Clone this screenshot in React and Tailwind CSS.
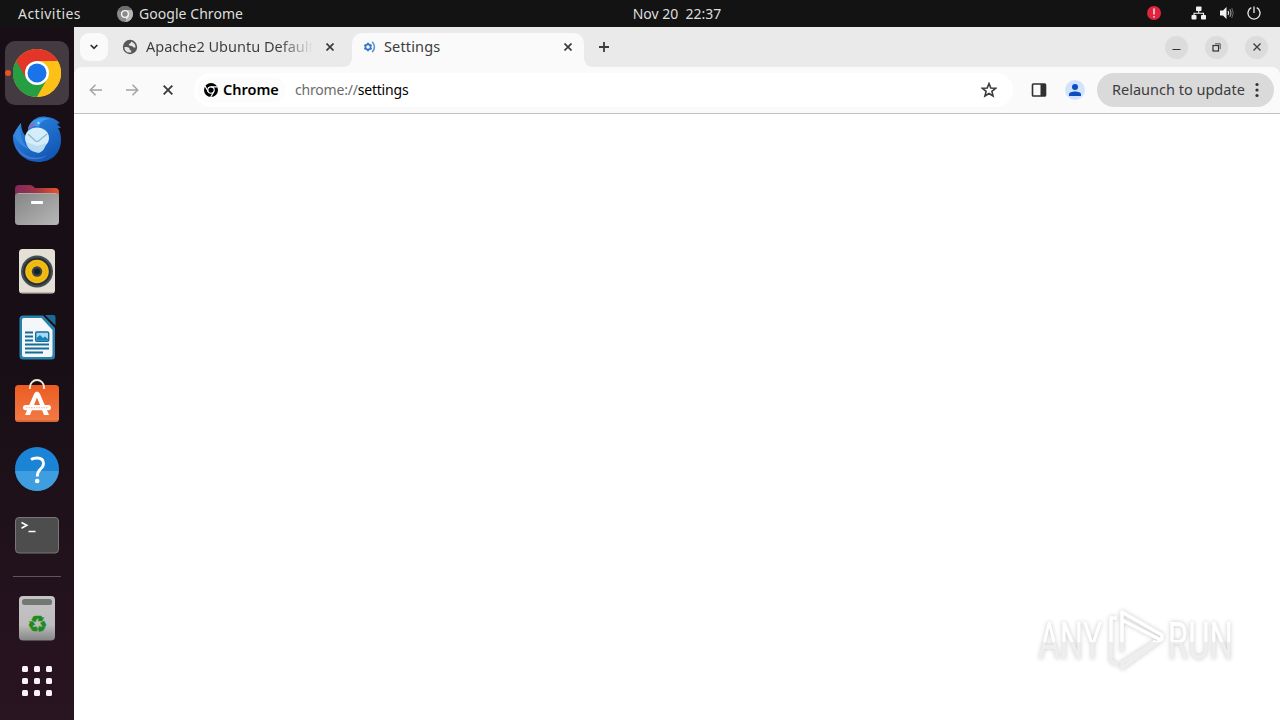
import React from 'react';
import clsx from 'clsx';

const ChromeLogo = () => (
  <svg width="48" height="48" viewBox="0 0 48 48">
    <circle cx="24" cy="24" r="24" fill="#fbc116" />
    <path d="M24 24 L3.2 12 A24 24 0 0 0 24 48 L34.4 30 Z" fill="#269f42" />
    <path d="M24 24 L13.6 30 L3.2 12 A24 24 0 0 1 44.8 12 H24 Z" fill="#e33629" />
    <path d="M24 12 H44.8 A24 24 0 0 1 24 48 L34.4 30 Z" fill="#fbc116" />
    <circle cx="24" cy="24" r="12" fill="#fff" />
    <circle cx="24" cy="24" r="9.5" fill="#1a73e8" />
  </svg>
);

const MonoChrome = () => (
  <svg width="14" height="14" viewBox="0 0 48 48">
    <circle cx="24" cy="24" r="24" fill="#000" />
    <g fill="none" stroke="#fff" strokeWidth="4">
      <circle cx="24" cy="24" r="11" />
      <path d="M24 13 H46 M14.5 29.5 L3.5 10.5 M33.5 29.5 L23 48" />
    </g>
  </svg>
);

const SymbolicChrome = () => (
  <svg width="16" height="16" viewBox="0 0 16 16">
    <circle cx="8" cy="8" r="8" fill="#8b8b8b" />
    <path d="M8 8 L1.1 4 A8 8 0 0 1 14.9 4 H8 Z" fill="#6d6d6d" />
    <path d="M8 4 H14.9 A8 8 0 0 1 8 16 L11.5 10 Z" fill="#b5b5b5" />
    <circle cx="8" cy="8" r="3.4" fill="#8b8b8b" stroke="#f4f4f4" strokeWidth="1.4" />
    <path d="M11.2 9.6 L9.2 13" stroke="#f4f4f4" strokeWidth="1.1" />
  </svg>
);

const Thunderbird = () => (
  <svg width="48" height="48" viewBox="0 0 48 48">
    <defs>
      <linearGradient id="bird" x1="0" y1="0" x2="0.7" y2="1">
        <stop offset="0" stopColor="#2f8be8" />
        <stop offset="1" stopColor="#1256b4" />
      </linearGradient>
    </defs>
    <path d="M8 8 C4 13 2 16 1 19 L0 20 C-1 33 9 47 25 47 C39 47 48 38 48 25 C48 20 47 16 45 13 L48 13 L44 9 L47 8 C43 4 38 2 34 2 C26 0 17 5 15 14 L14 23 C10 19 8 14 8 8 Z" fill="url(#bird)" />
    <path d="M15 14 C17 5 27 1 38 4 C30 4 27 7 26 12 C23 10 18 11 15 14 Z" fill="#3f9bf0" />
    <path d="M17 10 L22 7 L20 12 L16 14 Z" fill="#8a6bb4" />
    <path d="M8 8 C6 16 8 28 16 34 C7 31 2 24 1 19 C3 15 5 12 8 8 Z" fill="#3587e0" />
    <path d="M3 30 C9 42 23 46 34 40 C25 48 7 45 3 30 Z" fill="#4b79ce" />
    <ellipse cx="24" cy="23" rx="12" ry="10.5" fill="#d5edfa" />
    <path d="M13 27 L24 31 L33 28 C32 36 27 37 26 38 C19 37 14 34 13 27 Z" fill="#b9dcf5" />
    <path d="M15 19 L22.5 26 Q24 27 25.5 26 L34 19" fill="none" stroke="#8bb9d3" strokeWidth="1.2" />
    <circle cx="25.5" cy="8" r="1.2" fill="#a6dbfa" />
  </svg>
);

const Files = () => (
  <svg width="44" height="42" viewBox="0 0 44 42">
    <defs>
      <linearGradient id="folderBack">
        <stop offset="0" stopColor="#80285c" />
        <stop offset="0.5" stopColor="#a13545" />
        <stop offset="1" stopColor="#ed5428" />
      </linearGradient>
      <linearGradient id="folderFront" x1="0" y1="0" x2="1" y2="1">
        <stop offset="0" stopColor="#858585" />
        <stop offset="1" stopColor="#b7b7b7" />
      </linearGradient>
    </defs>
    <path d="M0 5 Q0 1 4 1 H15 Q17 1 18.5 2.5 L20 4 H40 Q44 4 44 8 V20 H0 Z" fill="url(#folderBack)" />
    <rect y="9" width="44" height="32" rx="3.5" fill="url(#folderFront)" />
    <path d="M3 9.5 H41" stroke="#ababab" />
    <rect x="16" y="17" width="12" height="3" rx="0.7" fill="#fff" />
  </svg>
);

const Rhythmbox = () => (
  <svg width="36" height="45" viewBox="0 0 36 45">
    <rect width="36" height="44.5" rx="3.5" fill="#e4e0d5" />
    <path d="M2 43.5 H34" stroke="#bbb6a9" />
    <circle cx="18" cy="22.5" r="16" fill="#454d52" />
    <circle cx="18" cy="22.5" r="13.8" fill="#282f34" />
    <circle cx="18" cy="22.5" r="11.8" fill="#f1bd13" />
    <circle cx="18" cy="22.5" r="9" fill="none" stroke="#dfae14" strokeWidth="0.7" />
    <circle cx="18" cy="22.5" r="5.2" fill="#3b4147" />
    <circle cx="18" cy="22.5" r="3" fill="#17202a" />
  </svg>
);

const Writer = () => (
  <svg width="37" height="45" viewBox="0 0 37 45">
    <path d="M4 0.5 H24 L36 13 V41 Q36 44.5 32.5 44.5 H4 Q0.5 44.5 0.5 41 V4 Q0.5 0.5 4 0.5 Z" fill="#2783ad" />
    <path d="M26 0 H34.5 Q36.5 0 36.5 2 V10.5 Z" fill="#1a6a96" />
    <path d="M5 3 H22.5 L33.5 15 V40 Q33.5 42 31.5 42 H5 Q3 42 3 40 V5 Q3 3 5 3 Z" fill="#f4f7f9" />
    <path d="M6 17.5 H14 M6 21.5 H14 M6 25.5 H14 M6 29.5 H30 M6 33.5 H30 M6 37.5 H24" stroke="#176c98" strokeWidth="1.8" />
    <rect x="16.7" y="17" width="13" height="9.3" rx="1" fill="#a4d8f4" stroke="#176c98" strokeWidth="1.4" />
    <path d="M17.5 25.5 V23 L21 20 L24 23 L26 21.5 L29 24 V25.5 Z" fill="#1682b8" />
  </svg>
);

const Software = () => (
  <svg width="44" height="44" viewBox="0 0 44 44" className="mb-1">
    <defs>
      <linearGradient id="bag" x1="0" y1="0" x2="0" y2="1">
        <stop offset="0" stopColor="#ec5c22" />
        <stop offset="1" stopColor="#f17b47" />
      </linearGradient>
    </defs>
    <rect y="6" width="44" height="37" rx="3.5" fill="url(#bag)" />
    <path d="M1.5 42 H42.5" stroke="#c9592d" />
    <path d="M15 10 V8 A7 7 0 0 1 29 8 V10" fill="none" stroke="#f5e9db" strokeWidth="1.9" />
    <path d="M10 36 L19 15 Q20 12.5 22 12.5 Q24 12.5 25 15 L34 36 H29 L22 18.5 L15 36 Z" fill="#fff" />
    <rect x="8" y="26" width="28" height="5.2" rx="2.6" fill="#fff" />
    <path d="M11 28.7 H33" stroke="#f2a47f" strokeWidth="0.8" strokeDasharray="1.5 1" />
  </svg>
);

const Help = () => (
  <svg width="44" height="44" viewBox="0 0 44 44">
    <circle cx="22" cy="22" r="22" fill="#1c84d4" />
    <path d="M0.1 24 H43.9 A22 22 0 0 1 0.1 24 Z" fill="#3e9edf" />
    <path d="M16 12.5 Q18.5 11 22 11 Q28.5 11 28.5 16.5 Q28.5 19.5 25.5 22 Q22.3 25 22.3 29.5" fill="none" stroke="#fff" strokeWidth="2.9" />
    <circle cx="22.2" cy="34" r="2.3" fill="#fff" />
  </svg>
);

const Terminal = () => (
  <svg width="44" height="37" viewBox="0 0 44 37">
    <rect x="0.5" y="0.5" width="43" height="35.5" rx="3.5" fill="#4d4d4d" stroke="#777" />
    <path d="M6.5 5.5 L11.8 8.3 L6.5 11.2 M13.5 14.5 H20.5" fill="none" stroke="#fff" strokeWidth="1.6" />
  </svg>
);

const Trash = () => (
  <svg width="36" height="45" viewBox="0 0 36 45">
    <defs>
      <linearGradient id="bin" x1="0" y1="0" x2="0" y2="1">
        <stop offset="0" stopColor="#c4c4c4" />
        <stop offset="0.65" stopColor="#bdbdbd" />
        <stop offset="1" stopColor="#858585" />
      </linearGradient>
    </defs>
    <rect width="36" height="44.5" rx="4" fill="url(#bin)" />
    <rect x="3" y="3" width="30" height="6" rx="2.5" fill="#737773" />
    <text x="18.3" y="36.3" textAnchor="middle" fontSize="23" fill="#208b1b" stroke="#208b1b" strokeWidth="0.5" fontFamily="DejaVu Sans, sans-serif">♻</text>
  </svg>
);

const dockApps = [
  { name: 'chrome', Icon: ChromeLogo, active: true },
  { name: 'thunderbird', Icon: Thunderbird },
  { name: 'files', Icon: Files },
  { name: 'rhythmbox', Icon: Rhythmbox },
  { name: 'writer', Icon: Writer },
  { name: 'software', Icon: Software },
  { name: 'help', Icon: Help },
  { name: 'terminal', Icon: Terminal },
];

const Cross = ({ size = 8, width = 1.7 }) => (
  <svg width={size} height={size} viewBox="0 0 8 8" stroke="#3c3c3c" strokeWidth={width}>
    <path d="M0.5 0.5 L7.5 7.5 M7.5 0.5 L0.5 7.5" />
  </svg>
);

const TopBar = () => (
  <header className="flex h-[27px] shrink-0 items-center bg-[#131313] text-sm leading-[27px] text-[#dedede]">
    <div className="flex w-[572px] items-center pl-[18px]">
      <span className="w-[99px] tracking-[0.47px]">Activities</span>
      <SymbolicChrome />
      <span className="ml-1.5 tracking-[0.05px]">Google Chrome</span>
    </div>
    <div className="w-[210px] pb-px text-center whitespace-pre">Nov 20  22:37</div>
    <div className="flex flex-1 items-center justify-end pr-[19px] pb-px">
      <svg width="14" height="14" viewBox="0 0 14 14" className="mr-[30px]">
        <circle cx="7" cy="7" r="7" fill="#df2440" />
        <path d="M7 2.5 V8.5 M7 10 V11.5" stroke="#fff" strokeWidth="1.3" />
      </svg>
      <svg width="16" height="14" viewBox="0 0 16 14" className="mr-3" fill="#f2f2f2">
        <rect x="5" y="0.5" width="5.5" height="4.5" rx="0.8" />
        <rect x="0.5" y="9" width="5" height="4.5" rx="0.8" />
        <rect x="10" y="9" width="5" height="4.5" rx="0.8" />
        <path d="M7.7 5 V7.2 M3 9 V7.2 H12.5 V9" fill="none" stroke="#f2f2f2" strokeWidth="1.1" />
      </svg>
      <svg width="16" height="14" viewBox="0 0 16 14" className="mr-3" fill="none">
        <path d="M1 4.5 H4 L7.5 1 V13 L4 9.5 H1 Z" fill="#f2f2f2" />
        <path d="M9 5 Q10.5 7 9 9" stroke="#f2f2f2" strokeWidth="1.2" />
        <path d="M10.8 3.2 Q13.2 7 10.8 10.8" stroke="#a4a4a4" strokeWidth="1.1" />
        <path d="M12.8 2 Q15.7 7 12.8 12" stroke="#666" strokeWidth="1" />
      </svg>
      <svg width="14" height="14" viewBox="0 0 14 14" fill="none" stroke="#e9e9e9" strokeWidth="1.3">
        <path d="M4.3 1.7 A6 6 0 1 0 9.7 1.7 M7 0.5 V7" />
      </svg>
    </div>
  </header>
);

const Dock = () => (
  <aside className="flex w-[74px] shrink-0 flex-col items-center bg-linear-to-b from-[#180f16] from-50% to-[#291421] pt-3.5">
    <div className="flex flex-col gap-0.5">
      {dockApps.map(({ name, Icon, active }) => (
        <div
          key={name}
          className={clsx('relative flex size-16 items-center justify-center rounded-[10px]', active && 'bg-[#443a42]')}
        >
          {active && <span className="absolute top-[29px] left-0 size-1.5 rounded-full bg-[#e95420]" />}
          <Icon />
        </div>
      ))}
    </div>
    <div className="mt-[9px] mb-2.5 h-px w-12 bg-[#61545c]" />
    <div className="flex h-[62px] items-center">
      <Trash />
    </div>
    <div className="grid h-[63px] grid-cols-3 content-center gap-1.5">
      {[...Array(9)].map((_, i) => (
        <span key={i} className="size-1.5 rounded-[1.5px] bg-[#fbf2fa]" />
      ))}
    </div>
  </aside>
);

const TabStrip = () => (
  <div className="flex h-10 items-center bg-[#eaeaea] text-[#3c3c3c]">
    <div className="ml-1.5 flex size-7 items-center justify-center rounded-[9px] bg-[#fafafa]">
      <svg width="8" height="6" viewBox="0 0 8 6" fill="none" stroke="#2e2e2e" strokeWidth="1.7">
        <path d="M0.7 1 L4 4.3 L7.3 1" />
      </svg>
    </div>
    <div className="flex h-10 w-[244px] items-center pl-3.5">
      <svg width="16" height="16" viewBox="0 0 16 16">
        <circle cx="8" cy="8" r="7.2" fill="#575757" />
        <path d="M2.4 8 H5 Q7.6 8.2 7.8 10.2 V11.2 H9.2 V13.4 Q5.5 14.3 3.3 11.4 Q2.3 9.8 2.4 8 Z" fill="#e4e4e4" />
        <path d="M9 2.6 Q13.6 4 13.6 8.6 H11.6 Q10.8 6.8 9 7 Q7 7 6.8 5.6 Q6.8 4.3 8.4 4.2 Q9.2 4 9 2.6 Z" fill="#e4e4e4" />
      </svg>
      <div className="ml-2 w-[167px] overflow-hidden bg-linear-to-r from-[#3c3c3c] from-80% to-transparent bg-clip-text text-[14.5px] whitespace-nowrap text-transparent">
        Apache2 Ubuntu Default
      </div>
      <div className="ml-[13px]"><Cross /></div>
    </div>
    <div className="flex h-10 items-end">
      <svg width="10" height="10" viewBox="0 0 10 10" className="-ml-[10px]">
        <path d="M10 0 V10 H0 Q10 10 10 0" fill="#fafafa" />
      </svg>
      <div className="flex h-[34px] w-[232px] items-center rounded-t-[10px] bg-[#fafafa] pr-3 pb-1.5 pl-2.5">
        <svg width="16" height="16" viewBox="0 0 16 16" fill="none" stroke="#3878c7">
          <circle cx="6" cy="8" r="2.6" strokeWidth="1.7" />
          <path d="M6 5.4 V3.8 M8.25 6.7 L9.6 5.9 M8.25 9.3 L9.6 10.1 M6 10.6 V12.2 M3.75 9.3 L2.4 10.1 M3.75 6.7 L2.4 5.9" strokeWidth="1.9" />
          <path d="M10.2 2.8 Q14.6 8 10.2 13.2" strokeWidth="1.6" stroke="#5f95d8" />
        </svg>
        <span className="ml-1.5 flex-1 text-[14.5px] tracking-[0.15px]">Settings</span>
        <Cross />
      </div>
      <svg width="10" height="10" viewBox="0 0 10 10">
        <path d="M0 0 V10 H10 Q0 10 0 0" fill="#fafafa" />
      </svg>
    </div>
    <svg width="12" height="12" viewBox="0 0 12 12" className="ml-1" stroke="#3c3c3c" strokeWidth="1.8">
      <path d="M6 1 V11 M1 6 H11" />
    </svg>
    <div className="ml-auto flex gap-[17px] pr-3">
      <span className="flex size-[23px] items-center justify-center rounded-full bg-[#dcdcdc]">
        <svg width="9" height="9" viewBox="0 0 9 9"><path d="M0.5 6.5 H8.5" stroke="#333" /></svg>
      </span>
      <span className="flex size-[23px] items-center justify-center rounded-full bg-[#dcdcdc]">
        <svg width="9" height="9" viewBox="0 0 9 9" fill="none" stroke="#333">
          <rect x="1" y="2.5" width="5.5" height="5.5" strokeWidth="1.2" />
          <path d="M3 0.8 H8.2 V6" strokeWidth="0.8" />
        </svg>
      </span>
      <span className="flex size-[23px] items-center justify-center rounded-full bg-[#dcdcdc]">
        <Cross size={8} width={1.3} />
      </span>
    </div>
  </div>
);

const Arrow = ({ flip }) => (
  <svg width="14" height="12" viewBox="0 0 14 12" className={clsx(flip && 'rotate-180')} fill="none" stroke="#a4a4a4" strokeWidth="1.5">
    <path d="M6.5 0.7 L1.3 6 L6.5 11.3 M1.3 6 H13" />
  </svg>
);

const Toolbar = () => (
  <div className="flex h-[47px] items-center rounded-t-lg border-b border-[#bdc1be] bg-[#fafafa]">
    <div className="flex w-[120px] items-center pl-[15px]">
      <Arrow />
      <div className="ml-[22px]"><Arrow flip /></div>
      <div className="ml-6"><Cross size={10} width={1.5} /></div>
    </div>
    <div className="flex h-[34px] w-[819px] items-center rounded-full bg-white pl-[3px]">
      <div className="flex h-[26px] w-[89px] items-center rounded-full bg-[#fcfcfc] pl-[7px]">
        <MonoChrome />
        <span className="ml-[5px] text-[14.5px] font-semibold text-black">Chrome</span>
      </div>
      <span className="ml-[9px] flex-1 text-sm tracking-[-0.2px] text-black"><span className="text-[#6b6b6b]">chrome://</span>settings</span>
      <svg width="16" height="16" viewBox="0 0 16 16" className="mr-4" fill="none" stroke="#3c3c3c" strokeWidth="1.6">
        <path d="M8 1.6 L9.8 6 L14.6 6.3 L10.9 9.4 L12.1 14 L8 11.5 L3.9 14 L5.1 9.4 L1.4 6.3 L6.2 6 Z" />
      </svg>
    </div>
    <svg width="16" height="16" viewBox="0 0 16 16" className="ml-[18px]">
      <rect x="1.5" y="2" width="13" height="12" rx="0.8" fill="none" stroke="#303030" strokeWidth="1.6" />
      <rect x="9.5" y="2" width="5" height="12" fill="#303030" />
    </svg>
    <svg width="20" height="20" viewBox="0 0 20 20" className="ml-[18px]">
      <circle cx="10" cy="10" r="10" fill="#d3e3fd" />
      <circle cx="10" cy="7" r="3" fill="#0b4fbf" />
      <path d="M4 16 V14.2 C4 10.5 16 10.5 16 14.2 V16 Z" fill="#0b4fbf" />
    </svg>
    <div className="ml-3 flex h-[34px] w-[177px] items-center rounded-full bg-[#dadada] pl-[15px] text-[#3c3c3c]">
      <span className="w-[135px] text-[14.5px] whitespace-nowrap">Relaunch to update</span>
      <svg width="20" height="16" viewBox="0 0 20 16" fill="#333">
        <circle cx="10" cy="2.5" r="1.6" />
        <circle cx="10" cy="8" r="1.6" />
        <circle cx="10" cy="13.5" r="1.6" />
      </svg>
    </div>
  </div>
);

const Watermark = () => (
  <svg width="220" height="80" viewBox="0 0 220 80" className="absolute right-[35px] bottom-10 drop-shadow-[0_0_2px_rgba(0,0,0,0.22)]">
    <defs>
      <linearGradient id="shine" x1="0" y1="0" x2="0" y2="80" gradientUnits="userSpaceOnUse">
        <stop offset="0.52" stopColor="#ffffff" />
        <stop offset="0.53" stopColor="#eeeeee" />
      </linearGradient>
    </defs>
    <g fill="url(#shine)" fontFamily="Roboto, sans-serif" fontSize="51">
      <text x="13" y="59" textLength="103" lengthAdjust="spacingAndGlyphs" transform="translate(5.4 0) scale(0.62 1)">ANY</text>
      <text x="228" y="59" textLength="105" lengthAdjust="spacingAndGlyphs" transform="translate(1.5 0) scale(0.62 1)">RUN</text>
    </g>
    <g fill="none" stroke="url(#shine)" strokeWidth="3.5" strokeLinejoin="round">
      <path d="M97 52 V12 L137 35 V39 L97 68 V63 L131 41 M97 20 L136 40" />
      <path d="M92 18 H86 V61 L93 65" />
    </g>
  </svg>
);

export default function App() {
  return (
    <div className="flex h-[720px] w-[1280px] flex-col overflow-hidden font-['Noto_Sans',sans-serif]">
      <TopBar />
      <div className="flex min-h-0 flex-1">
        <Dock />
        <main className="flex min-w-0 flex-1 flex-col">
          <div className="bg-[#eaeaea]">
            <TabStrip />
            <Toolbar />
          </div>
          <section className="relative flex-1 bg-white">
            <Watermark />
          </section>
        </main>
      </div>
    </div>
  );
}
